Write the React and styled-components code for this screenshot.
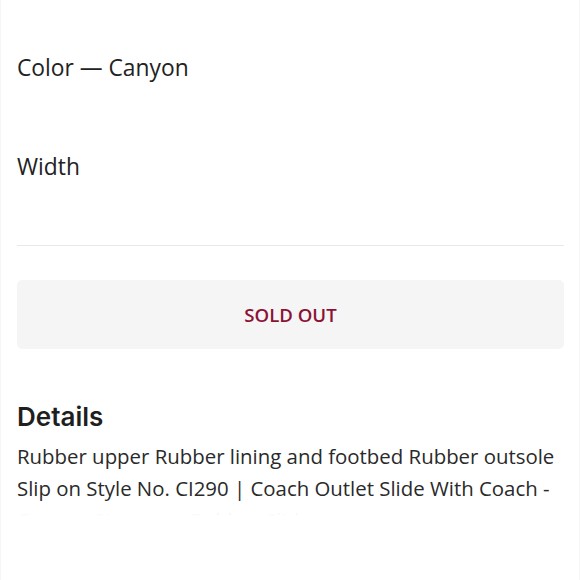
import React from "react";
import styled, { createGlobalStyle } from "styled-components";

const GlobalStyle = createGlobalStyle`
  html, body {
    margin: 0;
    padding: 0;
    background: #ffffff;
  }
  body {
    font-family: "Open Sans", "Noto Sans", sans-serif;
    color: #222222;
  }
`;

const Page = styled.div`
  width: 580px;
  height: 580px;
  box-sizing: border-box;
  padding: 53px 15px 0 16px;
  border-left: 1px solid #f6f6f6;
  border-right: 1px solid #f6f6f6;
  overflow: hidden;
`;

const OptionLabel = styled.div`
  font-size: 22.8px;
  line-height: 30px;
  color: #222222;
  margin-bottom: ${p => p.gap || 0}px;
`;

const Divider = styled.hr`
  border: 0;
  border-top: 1px solid #e9e9e9;
  margin: 0 0 34px;
`;

const SoldOutButton = styled.button`
  display: flex;
  align-items: center;
  justify-content: center;
  width: 100%;
  height: 69px;
  border: 0;
  border-radius: 5px;
  background: #f5f5f5;
  color: #8c1235;
  font-family: "Open Sans", sans-serif;
  font-size: 18.6px;
  font-weight: 600;
  cursor: not-allowed;
`;

const DetailsTitle = styled.h2`
  margin: 51px 0 6px;
  font-family: Inter, "Noto Sans", sans-serif;
  font-size: 26px;
  line-height: 34px;
  font-weight: 600;
  color: #1f1f1f;
`;

const Description = styled.div`
  position: relative;
  max-height: 76px;
  overflow: hidden;
  font-size: 20.4px;
  line-height: 32px;
  color: #2a2a2a;
`;

const Fade = styled.div`
  position: absolute;
  left: 0;
  right: 0;
  bottom: 0;
  height: 12px;
  background: linear-gradient(rgba(255, 255, 255, 0.8), #ffffff);
`;

export default function App() {
  return (
    <>
      <GlobalStyle />
      <Page>
        <OptionLabel gap={69}>Color — Canyon</OptionLabel>
        <OptionLabel gap={63}>Width</OptionLabel>
        <Divider />
        <SoldOutButton type="button" disabled>SOLD OUT</SoldOutButton>
        <DetailsTitle>Details</DetailsTitle>
        <Description>
          Rubber upper Rubber lining and footbed Rubber outsole Slip on Style No. CI290 | Coach Outlet Slide With Coach - Canyon Signature Rubber Slide
          <Fade />
        </Description>
      </Page>
    </>
  );
}
